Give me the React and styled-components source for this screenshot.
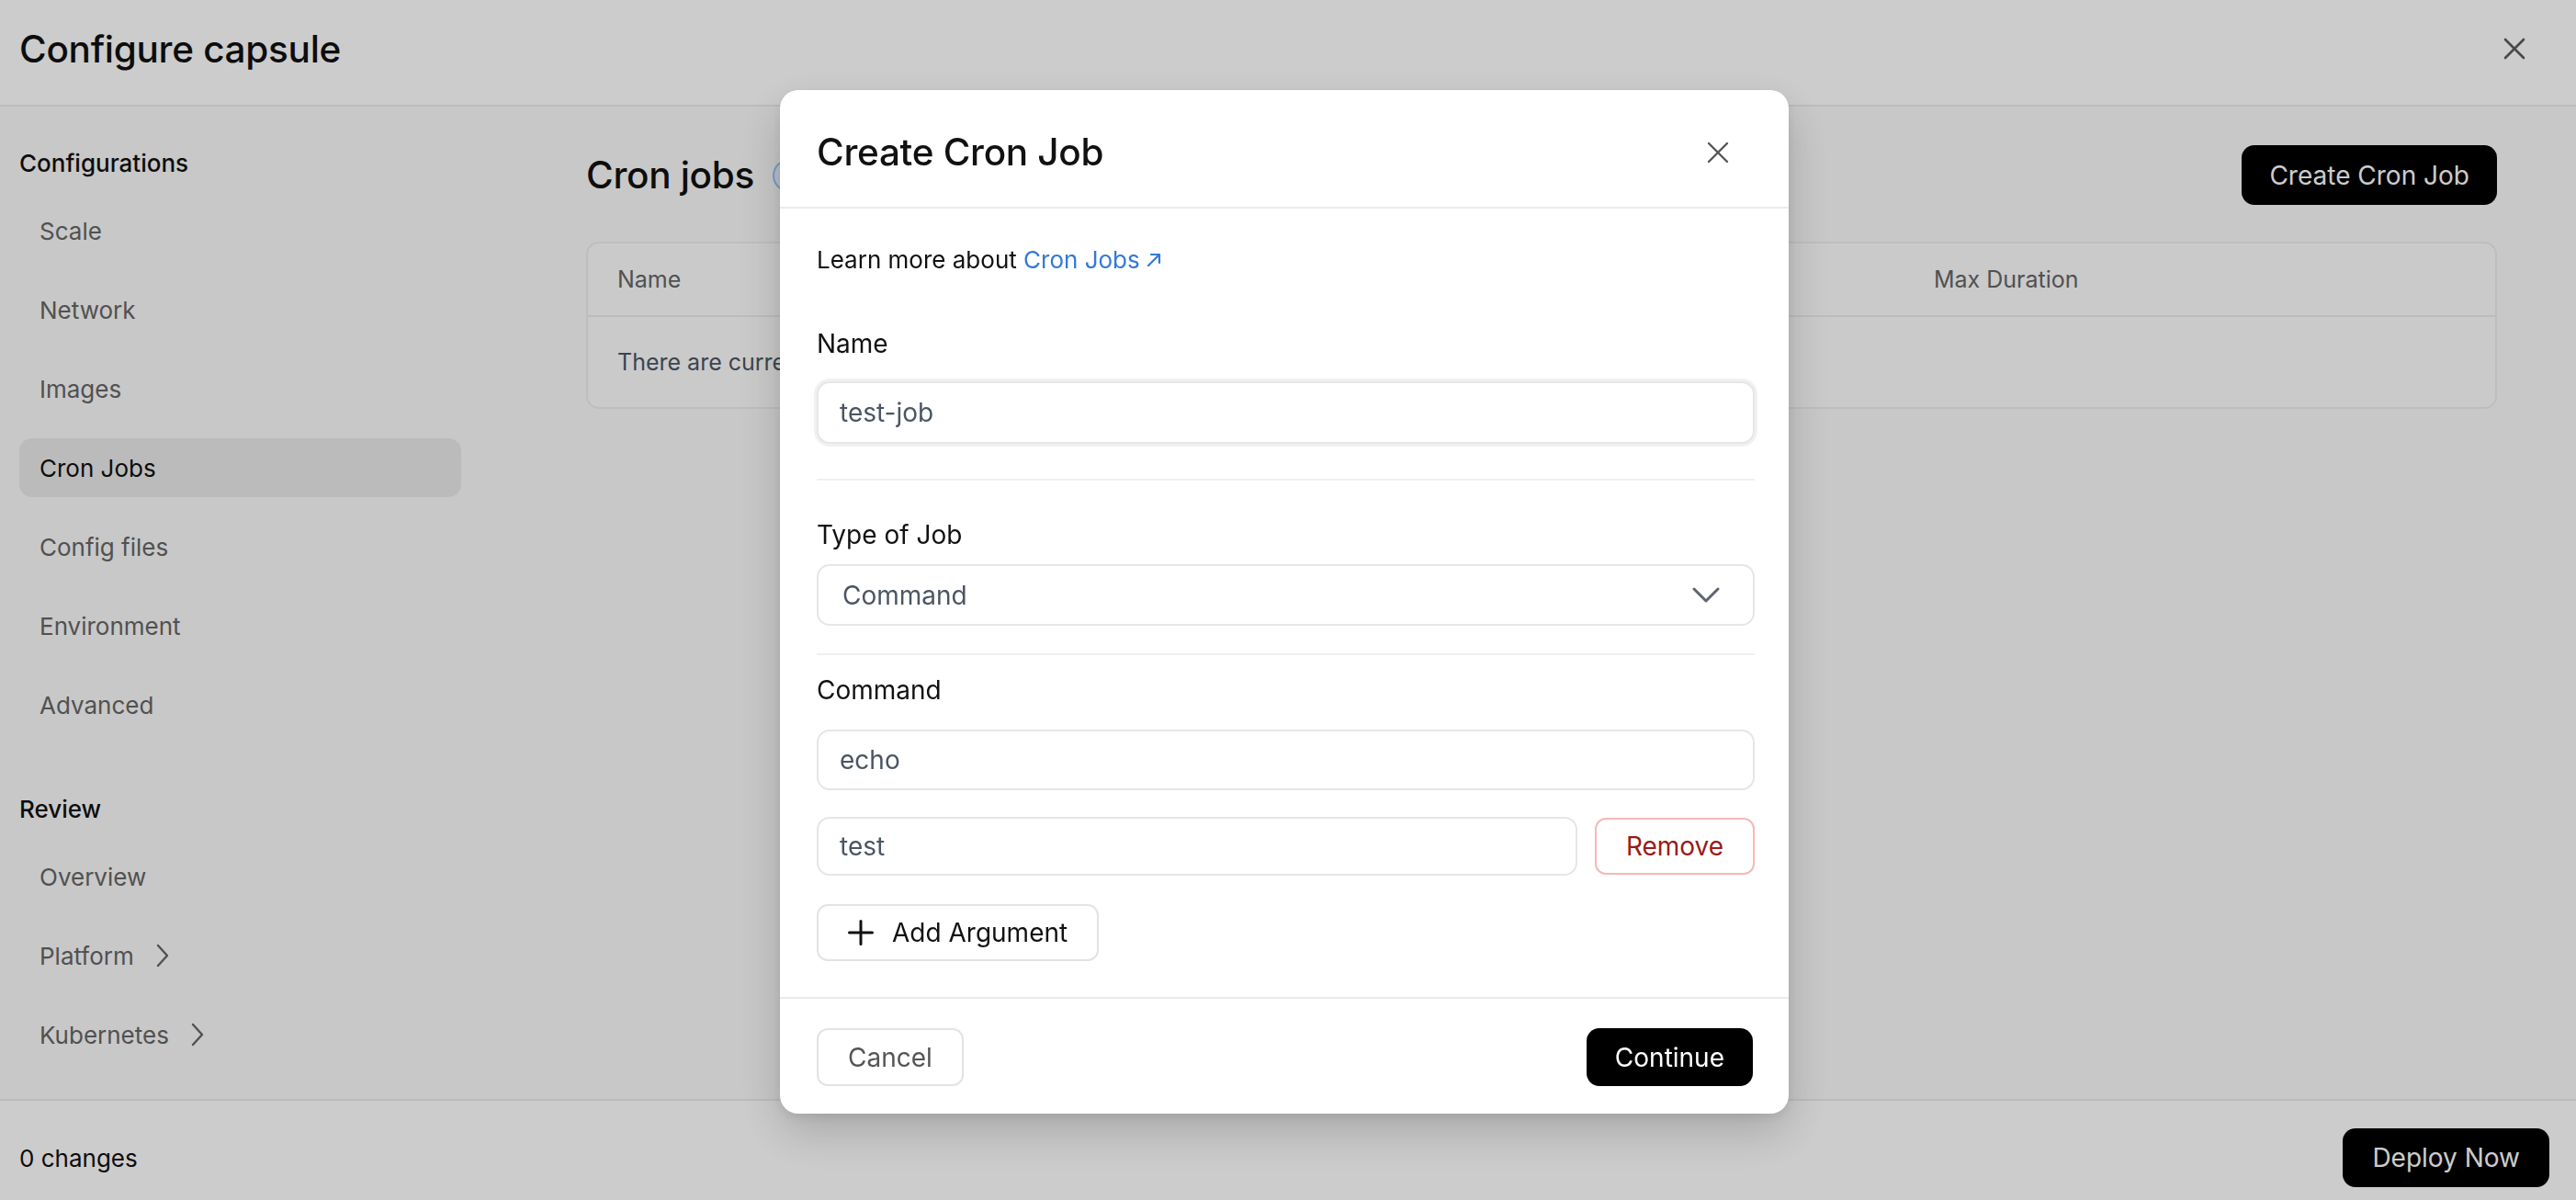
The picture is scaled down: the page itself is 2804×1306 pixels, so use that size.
import React from "react";
import styled, { createGlobalStyle } from "styled-components";

const GlobalStyle = createGlobalStyle`
  * {
    box-sizing: border-box;
  }
  html,
  body {
    margin: 0;
    padding: 0;
  }
  body {
    font-family: "Inter", "Noto Sans", sans-serif;
    color: #111;
    background: #fff;
    overflow: hidden;
  }
  button,
  input {
    font-family: inherit;
  }
`;

const configItems = [
  "Scale",
  "Network",
  "Images",
  "Cron Jobs",
  "Config files",
  "Environment",
  "Advanced",
];

const reviewItems = [
  { label: "Overview" },
  { label: "Platform", more: true },
  { label: "Kubernetes", more: true },
];

const CloseIcon = ({ size = 24, stroke = 2.5, color = "#555" }) => (
  <svg width={size} height={size} viewBox="0 0 24 24" fill="none">
    <path
      d="M2 2L22 22M22 2L2 22"
      stroke={color}
      strokeWidth={stroke}
      strokeLinecap="round"
    />
  </svg>
);

const ChevronRight = () => (
  <svg width="14" height="26" viewBox="0 0 14 26" fill="none">
    <path
      d="M2 2L12 13L2 24"
      stroke="#666"
      strokeWidth="2.4"
      strokeLinecap="round"
      strokeLinejoin="round"
    />
  </svg>
);

const ChevronDown = () => (
  <svg width="30" height="17" viewBox="0 0 30 17" fill="none">
    <path
      d="M2 2L15 15L28 2"
      stroke="#5f6471"
      strokeWidth="3"
      strokeLinecap="round"
      strokeLinejoin="round"
    />
  </svg>
);

const PlusIcon = () => (
  <svg width="28" height="28" viewBox="0 0 28 28" fill="none">
    <path
      d="M14 1.5V26.5M1.5 14H26.5"
      stroke="#111"
      strokeWidth="3"
      strokeLinecap="round"
    />
  </svg>
);

const ArrowUpRight = () => (
  <svg width="18" height="18" viewBox="0 0 18 18" fill="none">
    <path
      d="M3 15L15 3M6 3H15V12"
      stroke="#3479d6"
      strokeWidth="2.2"
      strokeLinecap="round"
      strokeLinejoin="round"
    />
  </svg>
);

const App = () => {
  return (
    <>
      <GlobalStyle />
      <Page>
        <Header>
          <PageHeading>Configure capsule</PageHeading>
          <IconButton aria-label="Close">
            <CloseIcon size={24} stroke={2.6} color="#5a5a5a" />
          </IconButton>
        </Header>

        <Body>
          <Sidebar>
            <GroupLabel>Configurations</GroupLabel>
            {configItems.map((item) => (
              <NavItem key={item} $active={item === "Cron Jobs"}>
                {item}
              </NavItem>
            ))}
            <GroupLabel $spaced>Review</GroupLabel>
            {reviewItems.map((item) => (
              <NavItem key={item.label}>
                {item.label}
                {item.more && <ChevronRight />}
              </NavItem>
            ))}
          </Sidebar>

          <Main>
            <MainHead>
              <SectionTitle>
                Cron jobs
                <Badge>0</Badge>
              </SectionTitle>
              <DarkButton>Create Cron Job</DarkButton>
            </MainHead>

            <Table>
              <TableRow $head>
                <span>Name</span>
                <span>Schedule</span>
                <span>Command</span>
                <span>Max Duration</span>
              </TableRow>
              <TableRow>
                <EmptyCell>There are currently no cron jobs configured.</EmptyCell>
              </TableRow>
            </Table>
          </Main>
        </Body>

        <Footer>
          <span>0 changes</span>
          <DarkButton $wide>Deploy Now</DarkButton>
        </Footer>
      </Page>

      <Overlay>
        <Dialog>
          <DialogHeader>
            <DialogTitle>Create Cron Job</DialogTitle>
            <IconButton aria-label="Close dialog">
              <CloseIcon size={24} stroke={2.4} color="#555" />
            </IconButton>
          </DialogHeader>

          <DialogBody>
            <LearnMore>
              Learn more about{" "}
              <DocLink href="#">
                Cron Jobs
                <ArrowUpRight />
              </DocLink>
            </LearnMore>

            <FieldLabel $mt={50}>Name</FieldLabel>
            <TextInput $mt={20} $h={68} $focused defaultValue="test-job" />

            <Separator $mt={38} />

            <FieldLabel $mt={38}>Type of Job</FieldLabel>
            <SelectBox $mt={11}>
              <span>Command</span>
              <ChevronDown />
            </SelectBox>

            <Separator $mt={30} />

            <FieldLabel $mt={17}>Command</FieldLabel>
            <TextInput $mt={22} defaultValue="echo" />

            <ArgRow>
              <TextInput defaultValue="test" />
              <RemoveButton>Remove</RemoveButton>
            </ArgRow>

            <AddButton>
              <PlusIcon />
              Add Argument
            </AddButton>
          </DialogBody>

          <DialogFooter>
            <OutlineButton>Cancel</OutlineButton>
            <DarkButton $compact>Continue</DarkButton>
          </DialogFooter>
        </Dialog>
      </Overlay>
    </>
  );
};

export default App;

const Page = styled.div`
  height: 100vh;
  display: flex;
  flex-direction: column;
  background: #fafafa;
`;

const Header = styled.header`
  height: 116px;
  flex-shrink: 0;
  display: flex;
  align-items: center;
  justify-content: space-between;
  padding: 0 43px 8px 21px;
  background: #fff;
  border-bottom: 2px solid #ebebeb;
`;

const PageHeading = styled.h1`
  margin: 0;
  font-size: 40.5px;
  font-weight: 500;
  letter-spacing: -0.3px;
  color: #111;
`;

const IconButton = styled.button`
  width: 48px;
  height: 48px;
  display: flex;
  align-items: center;
  justify-content: center;
  padding: 0;
  border: none;
  background: transparent;
  cursor: pointer;
`;

const Body = styled.div`
  flex: 1;
  min-height: 0;
  display: flex;
`;

const Sidebar = styled.nav`
  width: 540px;
  flex-shrink: 0;
  display: flex;
  flex-direction: column;
  gap: 22px;
  padding: 41px 38px 0 21px;
`;

const GroupLabel = styled.div`
  font-size: 26px;
  font-weight: 500;
  line-height: 42px;
  color: #111;
  margin-top: ${(p) => (p.$spaced ? "39px" : "0")};
  margin-bottom: -2px;
`;

const NavItem = styled.div`
  height: 64px;
  display: flex;
  align-items: center;
  gap: 24px;
  padding: 0 22px;
  border-radius: 14px;
  font-size: 26px;
  color: ${(p) => (p.$active ? "#111" : "#666")};
  background: ${(p) => (p.$active ? "#eaeaea" : "transparent")};
`;

const Main = styled.main`
  flex: 1;
  min-width: 0;
  padding: 42px 86px 0 98px;
`;

const MainHead = styled.div`
  height: 65px;
  display: flex;
  align-items: center;
  justify-content: space-between;
`;

const SectionTitle = styled.h2`
  margin: 0;
  display: flex;
  align-items: center;
  gap: 20px;
  font-size: 40.5px;
  font-weight: 500;
  letter-spacing: -0.3px;
`;

const Badge = styled.span`
  height: 36px;
  padding: 0 14px;
  display: inline-flex;
  align-items: center;
  border: 2px solid #93c5fd;
  border-radius: 18px;
  background: #e6f0ff;
  color: #1d4ed8;
  font-size: 22px;
  font-weight: 500;
`;

const DarkButton = styled.button`
  height: ${(p) => (p.$compact ? "63px" : p.$wide ? "64px" : "65px")};
  padding: 0 ${(p) => (p.$compact ? "31px" : p.$wide ? "32px" : "30px")};
  border: none;
  border-radius: 14px;
  background: #000;
  color: #fff;
  font-size: 28px;
  cursor: pointer;
`;

const Table = styled.div`
  margin-top: 40px;
  border: 2px solid #eeeeee;
  border-radius: 14px;
  background: #fdfdfd;
  overflow: hidden;
`;

const TableRow = styled.div`
  display: grid;
  grid-template-columns: 478px 450px 505px 1fr;
  align-items: center;
  padding: 0 32px;
  height: ${(p) => (p.$head ? "80px" : "98px")};
  border-bottom: ${(p) => (p.$head ? "2px solid #ececf0" : "none")};
  font-size: 25px;
  color: ${(p) => (p.$head ? "#666" : "#4b5563")};
`;

const EmptyCell = styled.span`
  grid-column: 1 / -1;
`;

const Footer = styled.footer`
  height: 110px;
  flex-shrink: 0;
  display: flex;
  align-items: center;
  justify-content: space-between;
  padding: 16px 29px 0 21px;
  background: #fff;
  border-top: 2px solid #ebebeb;
  font-size: 26px;
  color: #111;
`;

const Overlay = styled.div`
  position: fixed;
  inset: 0;
  display: flex;
  align-items: center;
  justify-content: center;
  background: rgba(0, 0, 0, 0.2);
`;

const Dialog = styled.div`
  width: 1098px;
  margin: 4px 8px 0 0;
  display: flex;
  flex-direction: column;
  background: #fff;
  border-radius: 20px;
  box-shadow: 0 20px 50px rgba(0, 0, 0, 0.18), 0 4px 12px rgba(0, 0, 0, 0.08);
  overflow: hidden;
`;

const DialogHeader = styled.div`
  height: 129px;
  display: flex;
  align-items: center;
  justify-content: space-between;
  padding: 8px 53px 0 40px;
  border-bottom: 2px solid #ebebeb;
`;

const DialogTitle = styled.h3`
  margin: 0;
  font-size: 40.5px;
  font-weight: 500;
  letter-spacing: -0.3px;
`;

const DialogBody = styled.div`
  display: flex;
  flex-direction: column;
  padding: 36px 37px 39px 40px;
`;

const LearnMore = styled.p`
  margin: 0;
  font-size: 26px;
  line-height: 40px;
  color: #111;
`;

const DocLink = styled.a`
  display: inline-flex;
  align-items: center;
  gap: 6px;
  color: #3479d6;
  text-decoration: none;
`;

const FieldLabel = styled.label`
  font-size: 28px;
  line-height: 42px;
  color: #111;
  margin-top: ${(p) => p.$mt}px;
`;

const TextInput = styled.input`
  width: 100%;
  height: ${(p) => p.$h || 66}px;
  margin-top: ${(p) => p.$mt || 0}px;
  padding: 0 23px;
  border: 2px solid #e6e6e6;
  border-radius: 14px;
  background: #fff;
  font-size: 28px;
  color: #4b5563;
  outline: none;
  box-shadow: ${(p) => (p.$focused ? "0 0 0 3px #f1f1f1" : "none")};
`;

const SelectBox = styled.div`
  height: 67px;
  margin-top: ${(p) => p.$mt}px;
  display: flex;
  align-items: center;
  justify-content: space-between;
  padding: 0 36px 0 26px;
  border: 2px solid #e6e6e6;
  border-radius: 14px;
  font-size: 28px;
  color: #4b5563;
`;

const Separator = styled.hr`
  margin: ${(p) => p.$mt}px 0 0;
  height: 2px;
  border: none;
  background: #f0f0f0;
`;

const ArgRow = styled.div`
  display: flex;
  align-items: center;
  gap: 19px;
  margin-top: 29px;

  input {
    flex: 1;
    height: 64px;
  }
`;

const OutlineButton = styled.button`
  height: 63px;
  display: inline-flex;
  align-items: center;
  gap: 20px;
  padding: 0 32px;
  border: 2px solid #e3e3e3;
  border-radius: 12px;
  background: #fff;
  font-size: 28px;
  color: #555;
  cursor: pointer;
`;

const AddButton = styled(OutlineButton)`
  align-self: flex-start;
  height: 62px;
  margin-top: 31px;
  color: #111;
`;

const RemoveButton = styled.button`
  width: 174px;
  height: 62px;
  border: 2px solid #f6b8b8;
  border-radius: 12px;
  background: #fff;
  color: #991b1b;
  font-size: 28px;
  cursor: pointer;
`;

const DialogFooter = styled.div`
  display: flex;
  align-items: center;
  justify-content: space-between;
  padding: 32px 39px 30px 40px;
  border-top: 2px solid #ebebeb;
`;
